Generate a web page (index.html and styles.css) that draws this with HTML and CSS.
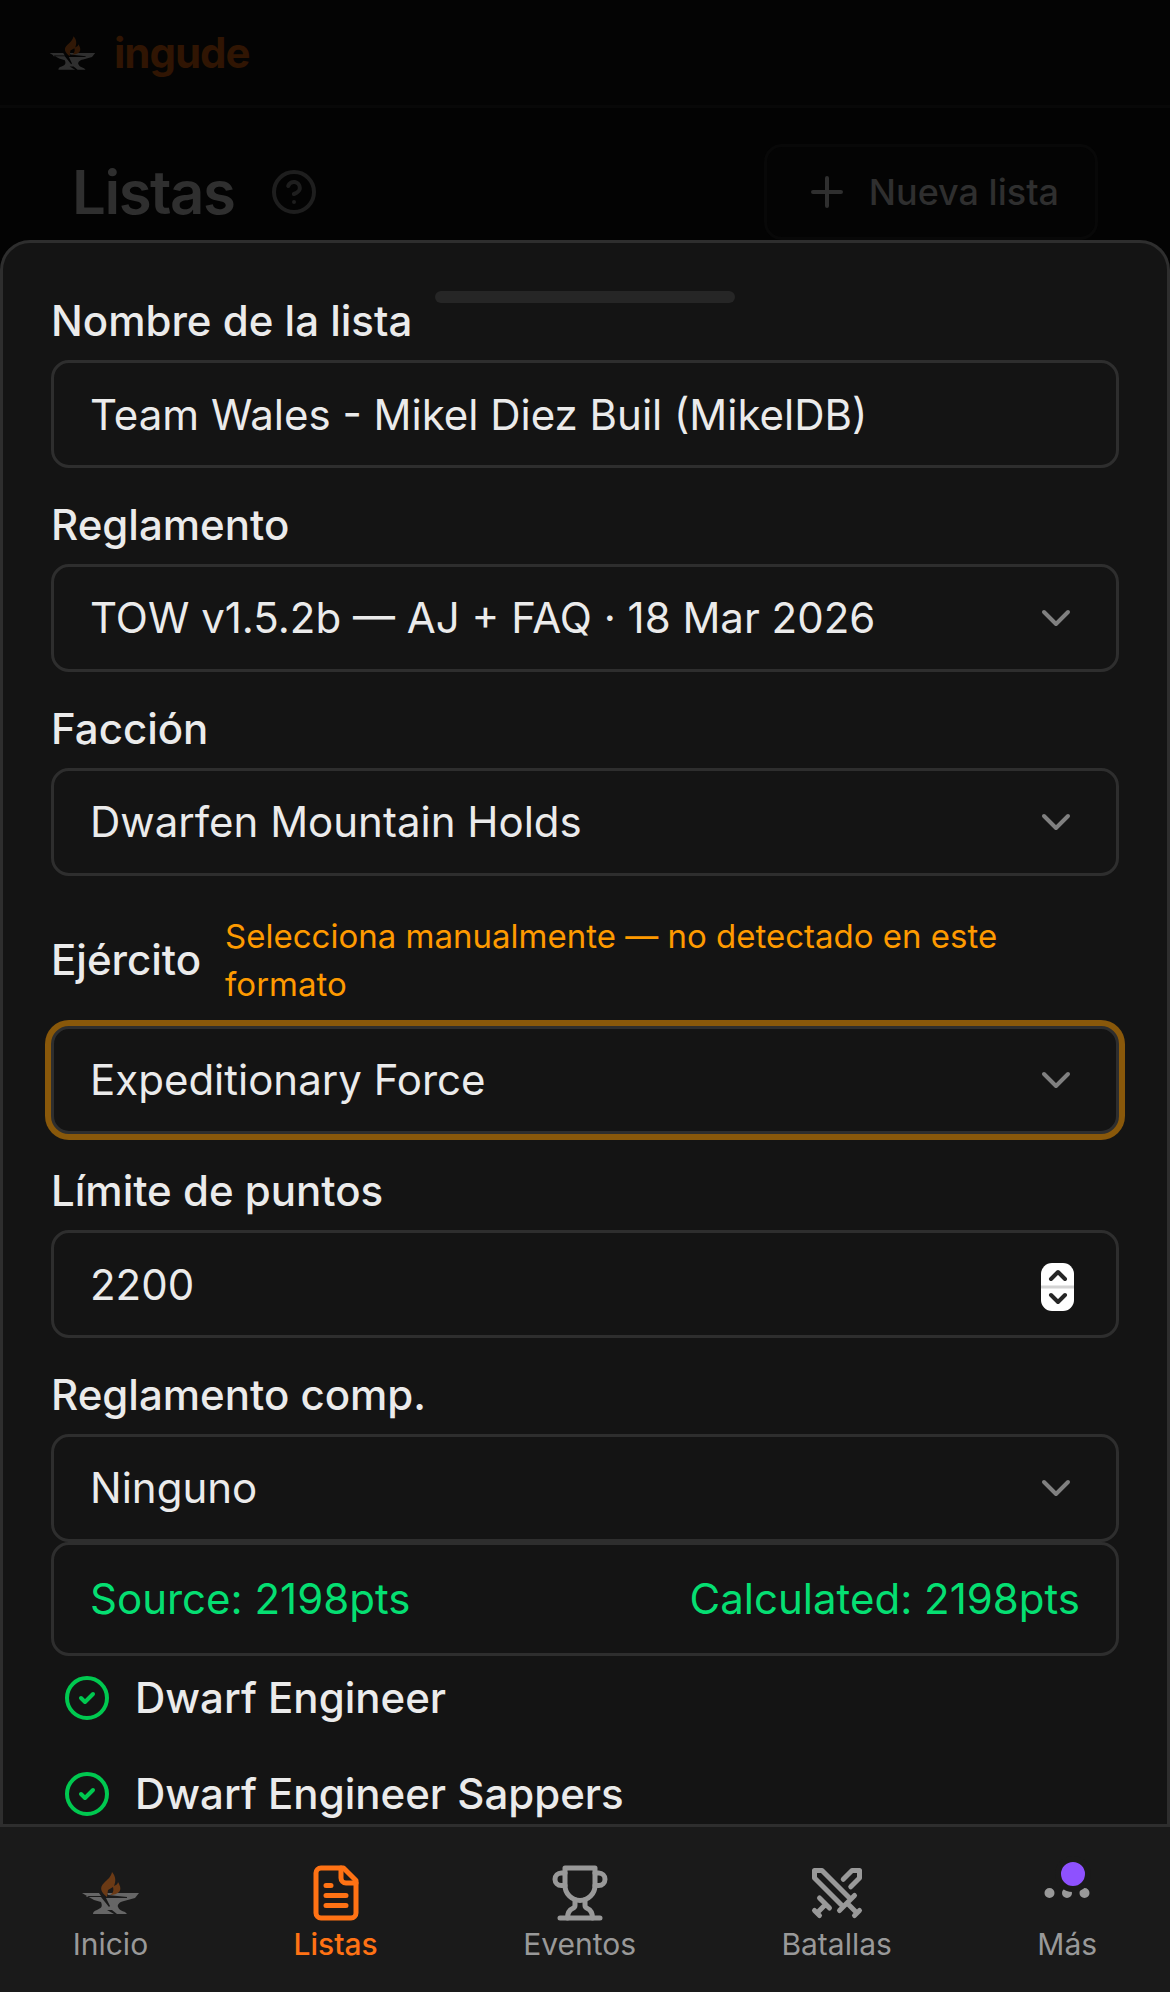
FILE: index.html
```html
<!doctype html>
<html lang="es">
    <head>
        <title>ingude - Listas</title>
        <meta charset="utf-8">
        <meta name="viewport" content="width=device-width, initial-scale=1">
        <link rel="stylesheet" href="styles.css">
    </head>

    <body>
        <!-- shared icons -->
        <svg class="sprite" aria-hidden="true">
            <symbol id="anvil" viewBox="0 0 60 60">
                <path fill="#d8d8d8" d="M2 30h17l2 3H6l1 1h14l8 10 1-1-4-8h21v-1l-19-2-1-2h32l-4 5-11 3c-5 1-7 4-6 6 1 3 4 4 7 5l2 2H37l-5-4h-5l7 4H13c0-2 1-3 4-4 4-2 6-3 4-8l-7-2-7-4z"/>
                <path fill="#e56a10" d="M32 9c4 5 4 9 2 14 2-1 4-2 4-4 3 5 3 8 1 10-2 2-5 3-9 3 3-2 4-4 3-8l-5 3-1 7c-6-5-8-9-3-14 4-4 7-6 8-11z"/>
            </symbol>
            <symbol id="chevron" viewBox="0 0 24 24">
                <path d="m6 9 6 6 6-6"/>
            </symbol>
            <symbol id="check" viewBox="0 0 24 24">
                <circle cx="12" cy="12" r="10"/>
                <path d="m9 12 2 2 4-4"/>
            </symbol>
        </svg>

        <div class="page">
            <header class="topbar">
                <svg class="logo"><use href="#anvil"/></svg>
                <span class="brand">ingude</span>
            </header>

            <div class="title-row">
                <h1>Listas</h1>
                <svg class="icon help" viewBox="0 0 24 24">
                    <circle cx="12" cy="12" r="10"/>
                    <path d="M9.09 9a3 3 0 0 1 5.83 1c0 2-3 3-3 3"/>
                    <path d="M12 17h.01"/>
                </svg>
                <button type="button" class="new-list">
                    <svg class="icon" viewBox="0 0 24 24"><path d="M5 12h14M12 5v14"/></svg>
                    Nueva lista
                </button>
            </div>
        </div>

        <main class="sheet">
            <div class="handle"></div>

            <form class="fields">
                <div class="field">
                    <label for="name">Nombre de la lista</label>
                    <input type="text" id="name" class="control" value="Team Wales - Mikel Diez Buil (MikelDB)">
                </div>

                <div class="field">
                    <label for="rules">Reglamento</label>
                    <div class="select">
                        <select id="rules" class="control">
                            <option>TOW v1.5.2b — AJ + FAQ · 18 Mar 2026</option>
                        </select>
                        <svg class="icon chevron"><use href="#chevron"/></svg>
                    </div>
                </div>

                <div class="field">
                    <label for="faction">Facción</label>
                    <div class="select">
                        <select id="faction" class="control">
                            <option>Dwarfen Mountain Holds</option>
                        </select>
                        <svg class="icon chevron"><use href="#chevron"/></svg>
                    </div>
                </div>

                <div class="field">
                    <div class="label-row">
                        <label for="army">Ejército</label>
                        <span class="hint">Selecciona manualmente — no detectado en este formato</span>
                    </div>
                    <div class="select">
                        <select id="army" class="control warn">
                            <option>Expeditionary Force</option>
                        </select>
                        <svg class="icon chevron"><use href="#chevron"/></svg>
                    </div>
                </div>

                <div class="field">
                    <label for="points">Límite de puntos</label>
                    <div class="select">
                        <input type="number" id="points" class="control" value="2200">
                        <svg class="stepper" viewBox="0 0 33 48">
                            <rect width="33" height="48" rx="11" fill="#fff"/>
                            <path d="M0 24h33" stroke="#d4d4d4" stroke-width="3"/>
                            <path d="m10 16 7-7 7 7M10 32l7 7 7-7" fill="none" stroke="#262626" stroke-width="4" stroke-linecap="round" stroke-linejoin="round"/>
                        </svg>
                    </div>
                </div>

                <div class="field">
                    <label for="comp">Reglamento comp.</label>
                    <div class="select">
                        <select id="comp" class="control">
                            <option>Ninguno</option>
                        </select>
                        <svg class="icon chevron"><use href="#chevron"/></svg>
                    </div>
                </div>
            </form>

            <div class="totals">
                <span>Source: 2198pts</span>
                <span>Calculated: 2198pts</span>
            </div>

            <ul class="units">
                <li><svg class="icon ok"><use href="#check"/></svg>Dwarf Engineer</li>
                <li><svg class="icon ok"><use href="#check"/></svg>Dwarf Engineer Sappers</li>
            </ul>
        </main>

        <nav class="tabs">
            <a href="#inicio">
                <svg class="tab-icon anvil"><use href="#anvil"/></svg>
                Inicio
            </a>
            <a href="#listas" class="active">
                <svg class="icon tab-icon" viewBox="0 0 24 24">
                    <path d="M15 2H6a2 2 0 0 0-2 2v16a2 2 0 0 0 2 2h12a2 2 0 0 0 2-2V7Z"/>
                    <path d="M14 2v4a2 2 0 0 0 2 2h4M10 9H8M16 13H8M16 17H8"/>
                </svg>
                Listas
            </a>
            <a href="#eventos">
                <svg class="icon tab-icon" viewBox="0 0 24 24">
                    <path d="M6 9H4.5a2.5 2.5 0 0 1 0-5H6M18 9h1.5a2.5 2.5 0 0 0 0-5H18M4 22h16"/>
                    <path d="M10 14.66V17c0 .55-.47.98-.97 1.21C7.85 18.75 7 20.24 7 22M14 14.66V17c0 .55.47.98.97 1.21C16.15 18.75 17 20.24 17 22"/>
                    <path d="M18 2H6v7a6 6 0 0 0 12 0V2Z"/>
                </svg>
                Eventos
            </a>
            <a href="#batallas">
                <svg class="icon tab-icon" viewBox="0 0 24 24">
                    <path d="M14.5 17.5 3 6V3h3l11.5 11.5M13 19l6-6M16 16l4 4M19 21l2-2"/>
                    <path d="M14.5 6.5 18 3h3v3l-3.5 3.5M5 14l4 4M7 17l-3 3M3 19l2 2"/>
                </svg>
                Batallas
            </a>
            <a href="#mas">
                <svg class="icon tab-icon" viewBox="0 0 24 24">
                    <circle cx="12" cy="12" r="1"/>
                    <circle cx="19" cy="12" r="1"/>
                    <circle cx="5" cy="12" r="1"/>
                </svg>
                <span class="badge"></span>
                Más
            </a>
        </nav>
    </body>
</html>
```
FILE: styles.css
```css
*{
    box-sizing: border-box;
}

body{
    margin: 0;
    min-height: 100vh;
    display: flex;
    flex-direction: column;
    background: #030303;
    color: #ebebeb;
    font-family: Inter, "Liberation Sans", sans-serif;
    font-size: 42px;
    line-height: 60px;
}

.sprite{
    position: absolute;
    width: 0;
    height: 0;
}

.icon{
    width: 48px;
    height: 48px;
    flex: none;
    fill: none;
    stroke: currentColor;
    stroke-width: 2;
    stroke-linecap: round;
    stroke-linejoin: round;
}

/* dimmed page behind the sheet */
.topbar{
    display: flex;
    align-items: center;
    gap: 18px;
    height: 108px;
    padding: 0 48px;
    background: #040404;
    border-bottom: 3px solid #080808;
}

.logo{
    width: 48px;
    height: 48px;
    opacity: 0.2;
}

.brand{
    color: #301503;
    font-weight: 700;
    letter-spacing: -0.025em;
}

.title-row{
    display: flex;
    align-items: center;
    height: 132px;
    padding: 36px 72px 0;
}

h1{
    margin: 0;
    color: #2f2f2f;
    font-size: 60px;
    font-weight: 600;
    letter-spacing: -0.025em;
}

.help{
    margin-left: 36px;
    color: #1e1e1e;
}

.new-list{
    display: flex;
    align-items: center;
    gap: 18px;
    height: 96px;
    margin-left: auto;
    padding: 0 36px;
    background: #040404;
    border: 3px solid #080808;
    border-radius: 18px;
    color: #2f2f2f;
    font-family: inherit;
    font-size: 36px;
    font-weight: 500;
}

/* bottom sheet */
.sheet{
    flex: 1;
    padding: 48px 48px 0;
    background: #141414;
    border: 3px solid #2e2e2e;
    border-bottom: 0;
    border-radius: 30px 30px 0 0;
}

.handle{
    width: 300px;
    height: 12px;
    margin: 0 auto -3px;
    background: #262626;
    border-radius: 6px;
}

.fields{
    display: flex;
    flex-direction: column;
    gap: 36px;
}

.field{
    display: flex;
    flex-direction: column;
    gap: 18px;
}

label{
    font-weight: 500;
    line-height: 42px;
}

.label-row{
    display: flex;
    align-items: center;
    gap: 24px;
}

.hint{
    color: #fe9a00;
    font-size: 33px;
    line-height: 48px;
}

.control{
    display: block;
    width: 100%;
    height: 108px;
    margin: 0;
    padding: 0 36px;
    background: #141414;
    border: 3px solid #2e2e2e;
    border-radius: 18px;
    color: inherit;
    font: inherit;
    appearance: none;
}

.warn{
    box-shadow: 0 0 0 6px #89580a;
}

.select{
    position: relative;
}

.chevron{
    position: absolute;
    right: 39px;
    top: 30px;
    color: #808080;
    pointer-events: none;
}

input[type="number"]{
    -moz-appearance: textfield;
}

input[type="number"]::-webkit-inner-spin-button{
    display: none;
}

.stepper{
    position: absolute;
    right: 45px;
    top: 33px;
    width: 33px;
    height: 48px;
}

.totals{
    display: flex;
    justify-content: space-between;
    padding: 24px 36px;
    border: 3px solid #2e2e2e;
    border-radius: 18px;
    color: #05df72;
}

.units{
    display: flex;
    flex-direction: column;
    gap: 12px;
    margin: 0;
    padding: 0 12px;
    list-style: none;
    font-weight: 500;
}

.units li{
    display: flex;
    align-items: center;
    gap: 24px;
    height: 84px;
}

.ok{
    color: #00c950;
}

/* bottom navigation */
.tabs{
    position: sticky;
    bottom: 0;
    display: flex;
    justify-content: space-around;
    margin-top: -12px;
    padding: 36px 0 33px;
    background: #1a1a1a;
    border-top: 3px solid #2e2e2e;
}

.tabs a{
    position: relative;
    display: flex;
    flex-direction: column;
    align-items: center;
    gap: 6px;
    color: #999;
    font-size: 30px;
    line-height: 30px;
    text-decoration: none;
}

.tabs .active{
    color: #ff7214;
    font-weight: 500;
}

.tab-icon{
    width: 60px;
    height: 60px;
}

.anvil{
    opacity: 0.4;
}

.badge{
    position: absolute;
    top: -7px;
    right: 6px;
    width: 36px;
    height: 36px;
    background: #8e51ff;
    border: 6px solid #1a1a1a;
    border-radius: 50%;
}
```
